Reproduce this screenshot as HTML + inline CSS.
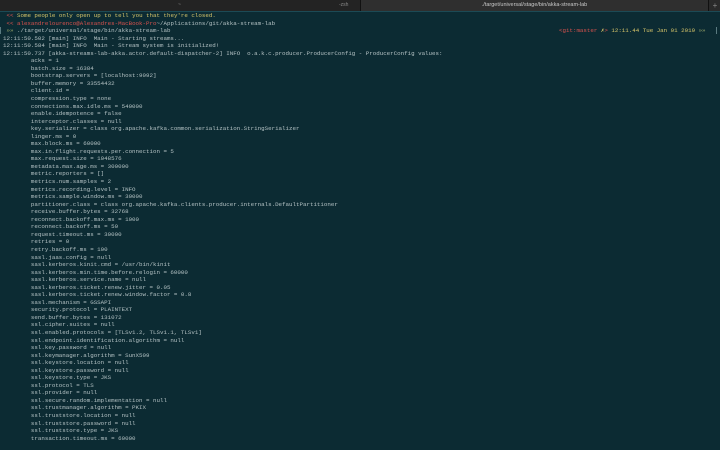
<!DOCTYPE html>
<html><head><meta charset="utf-8"><style>
html,body{margin:0;padding:0}
body{width:720px;height:450px;overflow:hidden;background:#0c2b33;position:relative;font-family:"Liberation Mono","DejaVu Sans Mono",monospace;}
.bar{position:absolute;left:0;top:0;width:720px;height:11px;background:#262626;border-bottom:1px solid #1c4a55}
.t1{position:absolute;left:0;top:0;width:360px;height:11px;background:#232323;border-right:1px solid #111}
.t2{position:absolute;left:361px;top:0;width:347px;height:11px;background:#2f2f2f;color:#c8c8c8;font:5.5px "Liberation Sans",sans-serif;line-height:11px;text-align:center}
.plus{position:absolute;left:708px;top:0;width:12px;height:11px;background:#2a2a2a;border-left:1px solid #111;color:#888;font:8px "Liberation Sans",sans-serif;line-height:11px;text-align:center}
.tl{position:absolute;top:0;line-height:11px;color:#888;font:5px "Liberation Sans",sans-serif;line-height:11px}
pre{position:absolute;left:3px;top:12px;margin:0;font-size:5.82px;line-height:7.55px;color:#b3c1c3;white-space:pre}
.r{color:#d8524e}.y{color:#d7c56a}.g{color:#9aa86a}
.rp{position:absolute;left:559px;top:27px;font-size:5.82px;line-height:7.55px;white-space:pre;color:#d7c56a}
.cur{position:absolute;left:0;top:27px;width:1px;height:7px;background:#5a7a80}
.cur2{position:absolute;left:716px;top:27px;width:1px;height:7px;background:#5a7a80}
</style></head><body>
<div class="bar"><div class="t1"></div><div class="t2">./target/universal/stage/bin/akka-stream-lab</div><div class="plus">+</div>
<div class="tl" style="left:178px">~</div><div class="tl" style="left:339px">-zsh</div></div>
<div class="cur"></div><div class="cur2"></div>
<pre> <span class="r">&lt;&lt;</span> <span class="y">Some people only open up to tell you that they're closed.</span>
 <span class="r">&lt;&lt; alexandrelourenco@Alexandres-MacBook-Pro</span>~/Applications/git/akka-stream-lab
 <span class="g">»»</span> ./target/universal/stage/bin/akka-stream-lab
12:11:50.502 [main] INFO  Main - Starting streams...
12:11:50.584 [main] INFO  Main - Stream system is initialized!
12:11:50.737 [akka-streams-lab-akka.actor.default-dispatcher-2] INFO  o.a.k.c.producer.ProducerConfig - ProducerConfig values:
        acks = 1
        batch.size = 16384
        bootstrap.servers = [localhost:9092]
        buffer.memory = 33554432
        client.id =
        compression.type = none
        connections.max.idle.ms = 540000
        enable.idempotence = false
        interceptor.classes = null
        key.serializer = class org.apache.kafka.common.serialization.StringSerializer
        linger.ms = 0
        max.block.ms = 60000
        max.in.flight.requests.per.connection = 5
        max.request.size = 1048576
        metadata.max.age.ms = 300000
        metric.reporters = []
        metrics.num.samples = 2
        metrics.recording.level = INFO
        metrics.sample.window.ms = 30000
        partitioner.class = class org.apache.kafka.clients.producer.internals.DefaultPartitioner
        receive.buffer.bytes = 32768
        reconnect.backoff.max.ms = 1000
        reconnect.backoff.ms = 50
        request.timeout.ms = 30000
        retries = 0
        retry.backoff.ms = 100
        sasl.jaas.config = null
        sasl.kerberos.kinit.cmd = /usr/bin/kinit
        sasl.kerberos.min.time.before.relogin = 60000
        sasl.kerberos.service.name = null
        sasl.kerberos.ticket.renew.jitter = 0.05
        sasl.kerberos.ticket.renew.window.factor = 0.8
        sasl.mechanism = GSSAPI
        security.protocol = PLAINTEXT
        send.buffer.bytes = 131072
        ssl.cipher.suites = null
        ssl.enabled.protocols = [TLSv1.2, TLSv1.1, TLSv1]
        ssl.endpoint.identification.algorithm = null
        ssl.key.password = null
        ssl.keymanager.algorithm = SunX509
        ssl.keystore.location = null
        ssl.keystore.password = null
        ssl.keystore.type = JKS
        ssl.protocol = TLS
        ssl.provider = null
        ssl.secure.random.implementation = null
        ssl.trustmanager.algorithm = PKIX
        ssl.truststore.location = null
        ssl.truststore.password = null
        ssl.truststore.type = JKS
        transaction.timeout.ms = 60000</pre>
<div class="rp"><span class="r">&lt;git:master <span class="y">✗</span>&gt;</span> 12:11.44 Tue Jan 01 2019 <span class="g">»»</span></div>
</body></html>
